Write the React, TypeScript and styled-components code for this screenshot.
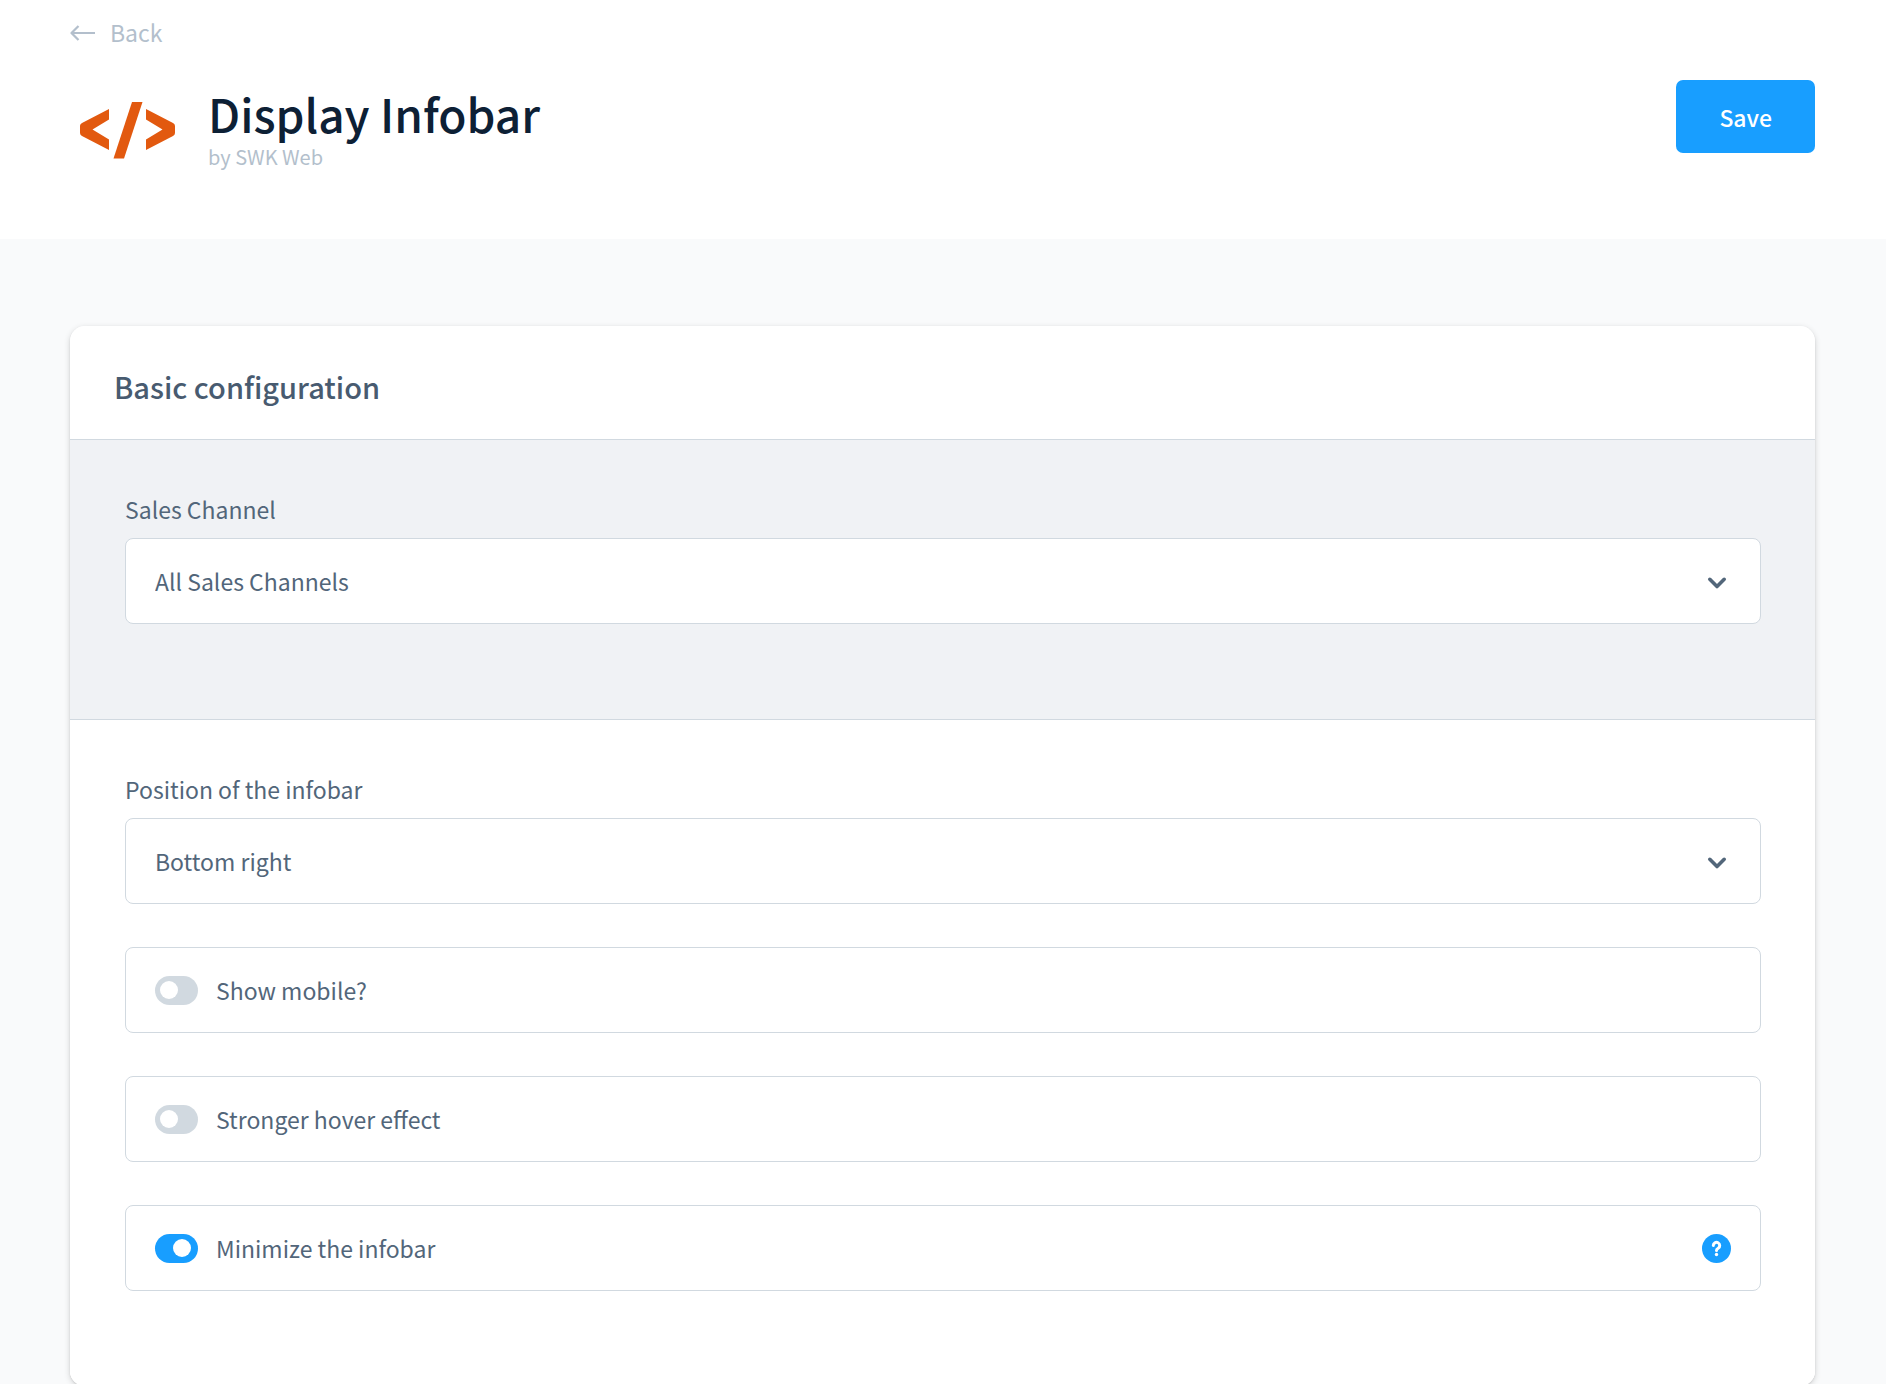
import React, { useId, useState } from "react";
import styled, { createGlobalStyle } from "styled-components";

const color = {
  primary: "#189eff",
  text: "#52667a",
  heading: "#485b70",
  title: "#0d2035",
  muted: "#b3bfcc",
  border: "#d1d9e0",
  page: "#f9fafb",
  section: "#f0f2f5",
  white: "#ffffff",
};

const GlobalStyle = createGlobalStyle`
  *, *::before, *::after { box-sizing: border-box; }
  body {
    margin: 0;
    background: ${color.page};
    color: ${color.text};
    font-family: "Noto Sans CJK SC", "Noto Sans", sans-serif;
    font-size: 23px;
    line-height: 32px;
    -webkit-font-smoothing: antialiased;
  }
`;

const Page = styled.div`
  display: flex;
  flex-direction: column;
  height: 100vh;
`;

const Header = styled.header`
  flex: none;
  padding: 16px 71px 59px 70px;
  background: ${color.white};
`;

const BackLink = styled.a`
  display: inline-flex;
  align-items: center;
  gap: 14px;
  color: ${color.muted};
  text-decoration: none;
  vertical-align: top;
`;

const HeaderRow = styled.div`
  display: flex;
  align-items: flex-start;
  margin-top: 32px;
`;

const PluginIcon = styled.svg`
  flex: none;
  width: 115px;
  height: 100px;
`;

const Titles = styled.div`
  flex: 1;
  padding: 3px 0 0 23px;
`;

const Title = styled.h1`
  margin: 0;
  color: ${color.title};
  font-size: 46px;
  font-weight: 500;
  line-height: 60px;
`;

const Author = styled.p`
  margin: 0;
  color: ${color.muted};
  font-size: 20px;
  line-height: 28px;
`;

const SaveButton = styled.button`
  height: 73px;
  padding: 0 43px;
  border: 0;
  border-radius: 7px;
  background: ${color.primary};
  color: ${color.white};
  font: inherit;
  font-weight: 500;
  cursor: pointer;
`;

const Content = styled.main`
  flex: 1;
  min-height: 0;
  overflow-y: auto;
  scrollbar-width: none;
  padding: 87px 71px 87px 70px;
`;

const Card = styled.section`
  overflow: hidden;
  border-radius: 15px;
  background: ${color.white};
`;

const CardShadow = styled.div`
  border-radius: 15px;
  box-shadow: 0 2px 6px rgba(0, 0, 0, 0.16), 0 1px 2px rgba(0, 0, 0, 0.1);
`;

const CardTitle = styled.h2`
  margin: 0;
  padding: 40px 44px 33px;
  color: ${color.heading};
  font-size: 29px;
  font-weight: 500;
  line-height: 40px;
`;

const Section = styled.div<{ $shaded?: boolean }>`
  display: flex;
  flex-direction: column;
  gap: 43px;
  padding: 53px 54px 95px 55px;
  border-top: 1px solid ${color.border};
  background: ${(p) => (p.$shaded ? color.section : color.white)};
`;

const Field = styled.div`
  display: flex;
  flex-direction: column;
  gap: 13px;
`;

const SelectBox = styled.div`
  position: relative;
`;

const Select = styled.select`
  display: block;
  width: 100%;
  height: 86px;
  padding: 0 80px 0 29px;
  border: 1px solid ${color.border};
  border-radius: 8px;
  background: ${color.white};
  color: inherit;
  font: inherit;
  appearance: none;
  cursor: pointer;
`;

const Chevron = styled.svg`
  position: absolute;
  top: 35px;
  right: 34px;
  width: 20px;
  height: 20px;
  pointer-events: none;
`;

const SwitchRow = styled.div`
  display: flex;
  align-items: center;
  gap: 18px;
  height: 86px;
  padding: 0 29px;
  border: 1px solid ${color.border};
  border-radius: 8px;
`;

const Switch = styled.input`
  flex: none;
  display: flex;
  align-items: center;
  width: 43px;
  height: 29px;
  margin: 0;
  padding: 0 7px 0 5px;
  border-radius: 15px;
  background: ${color.border};
  appearance: none;
  cursor: pointer;

  &::before {
    content: "";
    width: 18px;
    height: 18px;
    border-radius: 50%;
    background: ${color.white};
  }

  &:checked {
    justify-content: flex-end;
    background: ${color.primary};
  }
`;

const SwitchLabel = styled.label`
  flex: 1;
`;

const HelpButton = styled.button`
  display: flex;
  padding: 0;
  border: 0;
  border-radius: 50%;
  background: none;
  cursor: help;
`;

function SelectField({ label, options }: { label: string; options: string[] }) {
  const id = useId();
  return (
    <Field>
      <label htmlFor={id}>{label}</label>
      <SelectBox>
        <Select id={id}>
          {options.map((o) => (
            <option key={o}>{o}</option>
          ))}
        </Select>
        <Chevron viewBox="0 0 20 20" fill="none" aria-hidden="true">
          <path d="M2.800 6.300 10 13.500 17.200 6.300" stroke={color.text} strokeWidth="3.600" strokeLinecap="round" strokeLinejoin="round" />
        </Chevron>
      </SelectBox>
    </Field>
  );
}

function SwitchField({ label, initial = false, help }: { label: string; initial?: boolean; help?: boolean }) {
  const id = useId();
  const [on, setOn] = useState(initial);
  return (
    <SwitchRow>
      <Switch id={id} type="checkbox" checked={on} onChange={(e) => setOn(e.target.checked)} />
      <SwitchLabel htmlFor={id}>{label}</SwitchLabel>
      {help && (
        <HelpButton type="button" aria-label="Help">
          <svg width="29" height="29" viewBox="0 0 29 29" fill="none" aria-hidden="true">
            <circle cx="14.5" cy="14.5" r="14.5" fill={color.primary} />
            <path d="M11.300 11.600a3.200 3.200 0 1 1 4.900 2.700c-1.100.7-1.700 1.100-1.700 2.100" stroke={color.white} strokeWidth="3" strokeLinecap="round" />
            <circle cx="14.5" cy="20.500" r="1.700" fill={color.white} />
          </svg>
        </HelpButton>
      )}
    </SwitchRow>
  );
}

export default function App() {
  return (
    <Page>
      <GlobalStyle />
      <Header>
        <BackLink href="#">
          <svg width="26" height="18" viewBox="0 0 26 18" fill="none" stroke="currentColor" strokeWidth="2.200" aria-hidden="true">
            <path d="M25 10H1.500M8.500 3 1.500 10l7 7" strokeLinejoin="round" />
          </svg>
          Back
        </BackLink>
        <HeaderRow>
          <PluginIcon viewBox="0 0 115 100" fill="#e2590f" aria-hidden="true">
            <path d="M39 29v10.500L22.500 49.500l16.500 10V70L12 56q-2-1-2-3v-7q0-2 2-3Z" />
            <path d="M76 29v10.500l16.500 10L76 59.500V70l27-14q2-1 2-3v-7q0-2-2-3Z" />
            <path d="M62 22H72.500L54 78.500H43.500Z" />
          </PluginIcon>
          <Titles>
            <Title>Display Infobar</Title>
            <Author>by SWK Web</Author>
          </Titles>
          <SaveButton type="button">Save</SaveButton>
        </HeaderRow>
      </Header>
      <Content>
        <CardShadow>
          <Card>
            <CardTitle>Basic configuration</CardTitle>
            <Section $shaded>
              <SelectField label="Sales Channel" options={["All Sales Channels"]} />
            </Section>
            <Section>
              <SelectField label="Position of the infobar" options={["Bottom right", "Bottom left"]} />
              <SwitchField label="Show mobile?" />
              <SwitchField label="Stronger hover effect" />
              <SwitchField label="Minimize the infobar" initial help />
            </Section>
          </Card>
        </CardShadow>
      </Content>
    </Page>
  );
}
